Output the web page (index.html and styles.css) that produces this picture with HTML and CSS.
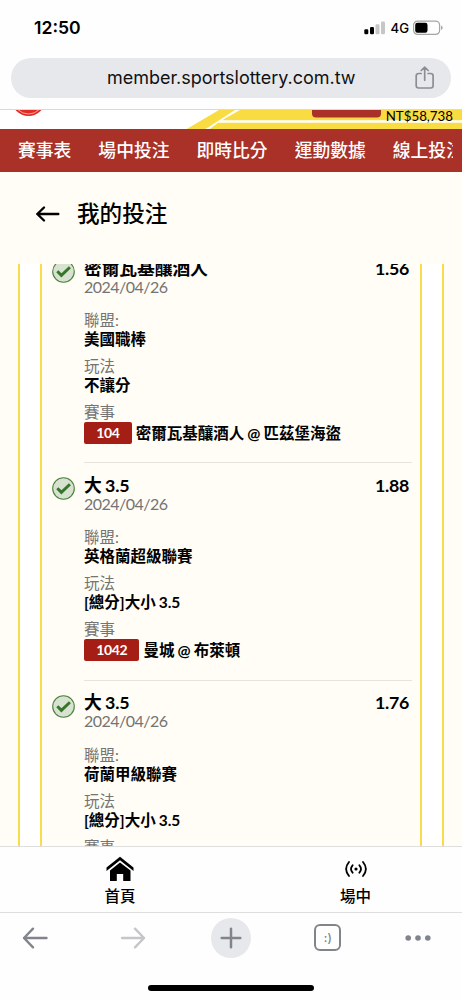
FILE: index.html
```html
<!DOCTYPE html>
<html lang="zh-Hant">
<head>
<meta charset="utf-8">
<meta name="viewport" content="width=device-width">
<title>我的投注</title>
<link rel="stylesheet" href="styles.css">
</head>
<body>
<div class="status">
  <span class="time">12:50</span>
  <div class="status-right">
    <svg width="22" height="14" viewBox="0 0 22 14"><rect x="0.3" y="8.3" width="4" height="5" rx="1.2" fill="#000"/><rect x="6" y="6" width="4" height="7.3" rx="1.2" fill="#000"/><rect x="11.5" y="3.2" width="4" height="10.1" rx="1.2" fill="#c6c6c6"/><rect x="17" y="0.5" width="4" height="12.8" rx="1.2" fill="#c6c6c6"/></svg>
    <span class="network">4G</span>
    <svg width="30" height="16" viewBox="0 0 30 16"><rect x="0.6" y="1.1" width="26" height="13.3" rx="4" fill="none" stroke="#a5a5a5" stroke-width="1.2"/><rect x="2.2" y="2.7" width="12.3" height="10" rx="2.2" fill="#000"/><path d="M28 5.5q1.7.8 1.7 2.3t-1.7 2.3z" fill="#a5a5a5"/></svg>
  </div>
</div>
<div class="address">
  <span class="url">member.sportslottery.com.tw</span>
  <svg class="share" width="20" height="24" viewBox="0 0 20 24" fill="none" stroke="#8b8f95" stroke-width="1.7" stroke-linecap="round" stroke-linejoin="round"><path d="M6.2 7.5H3.6Q1.2 7.5 1.2 9.9V19.6Q1.2 22 3.6 22H15.7Q18.1 22 18.1 19.6V9.9Q18.1 7.5 15.7 7.5H13.1M9.7 14.2V1.2M6.2 4.5 9.7 1.2 13.2 4.5"/></svg>
</div>
<div class="banner">
  <svg class="banner-art" width="462" height="20" viewBox="0 0 462 20"><circle cx="28.5" cy="-11" r="17" fill="#df2c25"/><circle cx="28.5" cy="-11" r="15" fill="none" stroke="#fff" stroke-width=".6"/><path d="M185 20 219 0H462V20Z" fill="#f9dc42"/><path d="M204 20 235 0H240L222 10.3H462V12.8H218L208.5 20Z" fill="#fff"/><path d="M312 0h69v3.500q0 4-4 4h-61q-4 0-4-4z" fill="#a93127"/></svg>
  <span class="balance">NT$58,738</span>
</div>
<div class="menu"><div class="menu-track"><span>賽事表</span><span>場中投注</span><span>即時比分</span><span>運動數據</span><span>線上投注</span></div></div>
<div class="title-row">
  <svg width="25" height="18" viewBox="0 0 25 18" fill="none" stroke="#000" stroke-width="2.4" stroke-linecap="round" stroke-linejoin="round"><path d="M23.3 9H2.3M9 2.5 2.3 9 9 15.5"/></svg>
  <h1>我的投注</h1>
</div>
<div class="viewport">
  <div class="outer"><div class="inner">
    <div class="bet">
      <svg class="check" width="23" height="23" viewBox="0 0 23 23"><circle cx="11.5" cy="11.5" r="10.8" fill="#d7e3d0" stroke="#4c8240" stroke-width="1.1"/><path d="M5.3 11.3 9.4 15.4 17.9 7.3" fill="none" stroke="#37752a" stroke-width="2.9"/></svg>
      <div class="details">
        <div class="headline"><span>密爾瓦基釀酒人</span><span class="odds">1.56</span></div>
        <div class="date">2024/04/26</div>
        <div class="field"><div class="label">聯盟:</div><div class="value">美國職棒</div></div>
        <div class="field"><div class="label">玩法</div><div class="value">不讓分</div></div>
        <div class="field"><div class="label">賽事</div><div class="match"><span class="badge">104</span><span>密爾瓦基釀酒人 @ 匹茲堡海盜</span></div></div>
      </div>
    </div>
    <div class="bet">
      <svg class="check" width="23" height="23" viewBox="0 0 23 23"><circle cx="11.5" cy="11.5" r="10.8" fill="#d7e3d0" stroke="#4c8240" stroke-width="1.1"/><path d="M5.3 11.3 9.4 15.4 17.9 7.3" fill="none" stroke="#37752a" stroke-width="2.9"/></svg>
      <div class="details">
        <div class="headline"><span>大 3.5</span><span class="odds">1.88</span></div>
        <div class="date">2024/04/26</div>
        <div class="field"><div class="label">聯盟:</div><div class="value">英格蘭超級聯賽</div></div>
        <div class="field"><div class="label">玩法</div><div class="value">[總分]大小 3.5</div></div>
        <div class="field"><div class="label">賽事</div><div class="match"><span class="badge">1042</span><span>曼城 @ 布萊頓</span></div></div>
      </div>
    </div>
    <div class="bet">
      <svg class="check" width="23" height="23" viewBox="0 0 23 23"><circle cx="11.5" cy="11.5" r="10.8" fill="#d7e3d0" stroke="#4c8240" stroke-width="1.1"/><path d="M5.3 11.3 9.4 15.4 17.9 7.3" fill="none" stroke="#37752a" stroke-width="2.9"/></svg>
      <div class="details">
        <div class="headline"><span>大 3.5</span><span class="odds">1.76</span></div>
        <div class="date">2024/04/26</div>
        <div class="field"><div class="label">聯盟:</div><div class="value">荷蘭甲級聯賽</div></div>
        <div class="field"><div class="label">玩法</div><div class="value">[總分]大小 3.5</div></div>
        <div class="field"><div class="label">賽事</div></div>
      </div>
    </div>
  </div></div>
</div>
<div class="tabs">
  <div class="tab home"><svg width="28" height="26" viewBox="0 0 28 26"><path d="M.5 11.5 14 .8 27.5 11.5V15L14 4.3.5 15Z"/><path d="M4 14.5 14 6.6 24.5 14.5V25H17.2V18H10.8V25H4Z"/></svg><span>首頁</span></div>
  <div class="tab live"><svg width="22" height="26" viewBox="0 0 22 26" fill="none" stroke="#000" stroke-width="1.8" stroke-linecap="round"><circle cx="11" cy="13" r="1.6" fill="#000" stroke="none"/><path d="M7.6 9.3Q4.4 13 7.6 16.7M14.4 9.3Q17.6 13 14.4 16.7M4 6Q-1.8 13 4 20M18 6Q23.800 13 18 20"/></svg><span>場中</span></div>
</div>
<div class="toolbar">
  <svg class="tool back" width="26" height="22" viewBox="0 0 26 22" fill="none" stroke="#80858c" stroke-width="2.4" stroke-linecap="round" stroke-linejoin="round"><path d="M24.500 11H2M11 1.700 2 11l9 9.300"/></svg>
  <svg class="tool" width="26" height="22" viewBox="0 0 26 22" fill="none" stroke="#c6c6c8" stroke-width="2.4" stroke-linecap="round" stroke-linejoin="round"><path d="M1 11H23M14 1.700 23 11 14 20.300"/></svg>
  <svg class="tool" width="40" height="40" viewBox="0 0 40 40"><circle cx="20" cy="20" r="20" fill="#e7e8ec"/><path d="M20 10.700V29.300M10.700 20H29.300" stroke="#80858c" stroke-width="2.5" stroke-linecap="round"/></svg>
  <span class="tab-count">:)</span>
  <svg class="tool" width="26" height="8" viewBox="0 0 26 8" fill="#80858c"><circle cx="3.200" cy="4" r="2.800"/><circle cx="13" cy="4" r="2.800"/><circle cx="22.800" cy="4" r="2.800"/></svg>
</div>
<div class="indicator"></div>
</body>
</html>
```
FILE: styles.css
```css
* { box-sizing: border-box; }
body {
  margin: 0;
  width: 462px;
  height: 1000px;
  overflow: hidden;
  display: flex;
  flex-direction: column;
  background: #fefefe;
  color: #000;
  font-family: Lato, "Noto Sans CJK TC", sans-serif;
}
body > div { flex: none; }
svg { display: block; flex: none; }
.status {
  height: 58px;
  padding: 0 19px 3px 34px;
  display: flex;
  align-items: center;
  justify-content: space-between;
  font-family: Inter, sans-serif;
}
.time { font-size: 17.6px; font-weight: 600; }
.status-right { display: flex; align-items: center; gap: 4px; }
.network { font-size: 13.2px; font-weight: 500; }
.address {
  height: 40px;
  margin: 0 11px;
  border-radius: 20px;
  background: #e7e8ec;
  display: flex;
  align-items: center;
  padding: 0 16px 0 96px;
  justify-content: space-between;
  font-family: Inter, sans-serif;
}
.url { font-size: 18px; white-space: nowrap; color: #111; padding-bottom: 2px; letter-spacing: -.03px; }
.banner {
  height: 20px;
  margin-top: 11px;
  border-top: 1px solid #d9d9d9;
  position: relative;
  background: #fff;
  overflow: hidden;
}
.balance {
  position: absolute;
  right: 9px;
  top: -2px;
  font-size: 13.3px;
  line-height: 16px;
}
.menu {
  height: 43px;
  background: #a93127;
  color: #fff;
  padding: 0 9px 0 18px;
}
.menu-track {
  height: 43px;
  padding-bottom: 3px;
  display: flex;
  align-items: center;
  gap: 27px;
  overflow: hidden;
  white-space: nowrap;
  font-size: 17.8px;
  font-weight: 500;
}
.title-row {
  height: 92px;
  background: #fffdf5;
  padding: 0 0 9px 35px;
  display: flex;
  align-items: center;
  gap: 17px;
}
.title-row h1 { margin: 0; font-size: 22.6px; line-height: 30px; font-weight: 500; }
.viewport {
  height: 582px;
  padding: 0 18px;
  background: #fffdf5;
  overflow: hidden;
}
.outer {
  height: 582px;
  border: solid #f9dc4c;
  border-width: 0 2px;
  background: #fff;
  padding: 0 20px;
}
.inner {
  height: 582px;
  border: solid #f9dc4c;
  border-width: 0 2px;
  background: #fffdf5;
  padding: 0 8px 0 10px;
  overflow: hidden;
}
.bet { display: flex; gap: 9px; height: 217.3px; }
.bet:first-child { margin-top: -18px; }
.check { margin-top: 14px; }
.details {
  flex: 1;
  padding-top: 12.7px;
  border-bottom: 1px solid #e6e3dc;
}
.headline {
  display: flex;
  justify-content: space-between;
  padding-right: 3px;
  font-size: 17.8px;
  line-height: 19px;
  font-weight: 700;
}
.headline span { letter-spacing: -.1px; word-spacing: -.9px; }
.headline .odds { letter-spacing: -.3px; }
.date { font-size: 16px; line-height: 18px; color: #747474; margin-bottom: 15.4px; letter-spacing: -.53px; }
.field { font-size: 15.5px; line-height: 19px; margin-bottom: 8px; }
.label { color: #747474; }
.value, .match { font-weight: 700; }
.value { word-spacing: -.8px; }
.match { display: flex; align-items: center; gap: 4px; white-space: nowrap; word-spacing: -.7px; }
.match span:last-child { padding-top: 1px; }
.badge {
  height: 22px;
  padding: 0 12.3px;
  border-radius: 2px;
  background: #a41e15;
  color: #fff;
  font-size: 14px;
  line-height: 22px;
  letter-spacing: -.4px;
}
.tabs {
  height: 66px;
  border-top: 1px solid #dedede;
  display: flex;
  justify-content: space-between;
  padding: 9px 89px 0 102px;
}
.tab {
  width: 36px;
  display: flex;
  flex-direction: column;
  align-items: center;
  font-size: 15.5px;
  line-height: 20px;
  font-weight: 500;
  gap: 4px;
}
.live { width: 35px; }
.toolbar {
  height: 51px;
  border-top: 1px solid #dedede;
  display: flex;
  align-items: center;
  gap: 63.8px;
  padding: 0 0 1px 22px;
}
.back { margin-right: 9px; }
.tab-count {
  flex: none;
  width: 27px;
  height: 27px;
  border: 2px solid #80858c;
  border-radius: 6px;
  text-align: center;
  color: #80858c;
  font: 500 12px/23px Inter, sans-serif;
}
.indicator {
  width: 166px;
  height: 6px;
  margin: 22px 0 0 148px;
  border-radius: 3px;
  background: #000;
}
```
